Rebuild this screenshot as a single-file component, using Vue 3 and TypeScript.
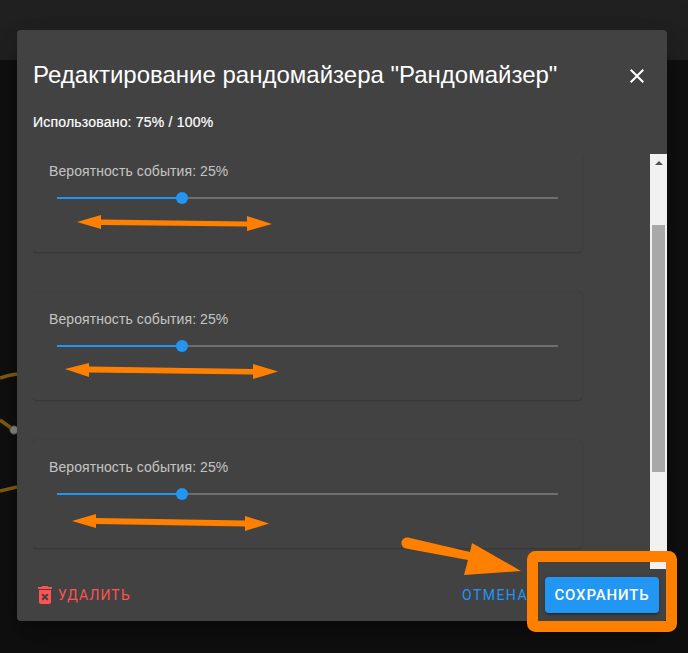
<script setup lang="ts">
const value = 25
const cards = [1, 2, 3]
</script>

<template>
  <div class="page">
    <div class="topbar"></div>
    <svg class="graph" width="17" height="653" viewBox="0 0 17 653">
      <path d="M0 378 Q8 375 17 374" class="edge" />
      <path d="M0 420 L14 430" class="edge" />
      <path d="M0 491 L17 487" class="edge" />
      <circle cx="14" cy="430" r="4.2" fill="#8f8f86" stroke="#3c4a58" stroke-width="1" />
    </svg>

    <div class="dialog">
      <header class="head">
        <h2 class="title">Редактирование рандомайзера "Рандомайзер"</h2>
        <button class="close" aria-label="Закрыть">
          <svg width="24" height="24" viewBox="0 0 24 24"><path fill="#fff" d="M19,6.41L17.59,5L12,10.59L6.41,5L5,6.41L10.59,12L5,17.59L6.41,19L12,13.41L17.59,19L19,17.59L13.41,12L19,6.41Z" /></svg>
        </button>
      </header>
      <div class="used">Использовано: 75% / 100%</div>

      <div class="scroll">
        <div class="list">
          <section v-for="c in cards" :key="c" class="card">
            <div class="label">Вероятность события: {{ value }}%</div>
            <div class="slider">
              <div class="fill" :style="{ width: value + '%' }">
                <span class="thumb"></span>
              </div>
            </div>
          </section>
        </div>
        <div class="scrollbar">
          <span class="sb-up"></span>
          <span class="sb-thumb"></span>
          <span class="sb-down"></span>
        </div>
      </div>

      <footer class="foot">
        <button class="btn danger">
          <svg class="trash" width="24" height="24" viewBox="0 0 24 24"><path fill="#ff5252" d="M6,19A2,2 0 0,0 8,21H16A2,2 0 0,0 18,19V7H6V19M8.46,11.88L9.87,10.47L12,12.59L14.12,10.47L15.53,11.88L13.41,14L15.53,16.12L14.12,17.53L12,15.41L9.87,17.53L8.46,16.12L10.59,14L8.46,11.88M15.5,4L14.5,3H9.5L8.5,4H5V6H19V4H15.5Z" /></svg>
          УДАЛИТЬ
        </button>
        <span class="spacer"></span>
        <button class="btn cancel">ОТМЕНА</button>
        <button class="btn save">СОХРАНИТЬ</button>
      </footer>
    </div>

    <svg class="marks" width="688" height="653" viewBox="0 0 688 653">
      <g fill="#ff8000">
        <path d="M77 222 L101 215 L101 219.5 L247 221.5 L247 216 L272 224 L247 231 L247 226.5 L101 225 L101 229 Z" />
        <path d="M65 369 L89 363 L89 366.5 L253 369 L253 364 L278 371.5 L253 379 L253 374.5 L89 372.5 L89 377 Z" />
        <path d="M72 521 L96 514 L96 518 L245 520.5 L245 516 L269 523.5 L245 531 L245 526.5 L96 524 L96 528 Z" />
        <path d="M472 543 L521 571 L464 575 L468 560 L406 548.5 A5.5 5.5 0 0 1 408 537.5 L470 552 Z" />
      </g>
      <rect x="532.5" y="556.5" width="139" height="70" rx="3" fill="none" stroke="#ff8000" stroke-width="11" />
    </svg>
  </div>
</template>

<style>
html, body { margin: 0; background: #101010; }
</style>

<style scoped>
.page {
  position: relative;
  width: 688px;
  height: 653px;
  overflow: hidden;
  background: #101010;
  font-family: "Liberation Sans", Arial, sans-serif;
}
.topbar {
  height: 60px;
  background: #212121;
}
.graph {
  position: absolute;
  left: 0;
  top: 0;
}
.edge {
  fill: none;
  stroke: #86600f;
  stroke-width: 3.5;
}
.dialog {
  position: absolute;
  left: 17px;
  top: 30px;
  width: 650px;
  height: 591px;
  display: flex;
  flex-direction: column;
  background: #424242;
  border-radius: 4px;
  color: #fff;
  box-shadow: 0 11px 15px -7px rgba(0,0,0,.2), 0 24px 38px 3px rgba(0,0,0,.14), 0 9px 46px 8px rgba(0,0,0,.12);
}
.head {
  display: flex;
  align-items: center;
  height: 32px;
  margin-top: 29px;
  padding: 0 18.5px 0 16px;
}
.title {
  flex: 1;
  margin: 0;
  font-size: 24px;
  font-weight: 400;
  line-height: 32px;
}
.close {
  width: 24px;
  height: 24px;
  padding: 0;
  border: 0;
  background: none;
  display: flex;
  transform: translateY(1px);
}
.used {
  margin: 21px 0 0 16px;
  height: 20px;
  font-size: 14px;
  font-weight: 400;
  line-height: 20px;
  letter-spacing: .2px;
  -webkit-text-stroke: .2px #fff;
}
.scroll {
  display: flex;
  justify-content: space-between;
  height: 415px;
  margin: 22px 0 0 16px;
  overflow: hidden;
}
.list {
  display: flex;
  flex-direction: column;
  gap: 40px;
  width: 549px;
  margin-top: -10px;
}
.card {
  box-sizing: border-box;
  height: 108px;
  padding: 17px 24px 0 16px;
  border-radius: 4px;
  background: #424242;
  box-shadow: 0 1px 2px 0 rgba(0,0,0,.18), 0 0 1px 0 rgba(0,0,0,.12);
}
.label {
  font-size: 14px;
  line-height: 20px;
  letter-spacing: .08px;
  color: rgba(255,255,255,.7);
}
.slider {
  height: 2px;
  margin: 16px 0 0 8px;
  background: #6e6e6e;
}
.fill {
  position: relative;
  height: 100%;
  background: #2196f3;
}
.thumb {
  position: absolute;
  right: -6px;
  top: -5px;
  width: 12px;
  height: 12px;
  border-radius: 50%;
  background: #2196f3;
}
.scrollbar {
  position: relative;
  flex: none;
  width: 17px;
  background: #f1f1f1;
}
.sb-up {
  position: absolute;
  left: 5px;
  top: 7px;
  border: 4px solid transparent;
  border-top: 0;
  border-bottom: 4px solid #505050;
}
.sb-down {
  position: absolute;
  left: 5px;
  bottom: 7px;
  border: 4px solid transparent;
  border-bottom: 0;
  border-top: 4px solid #505050;
}
.sb-thumb {
  position: absolute;
  left: 2px;
  top: 71px;
  width: 13px;
  height: 247px;
  background: #a8a8a8;
}
.foot {
  flex: 1;
  display: flex;
  align-items: center;
  padding: 0 8px 0 16px;
}
.spacer {
  flex: 1;
}
.btn {
  display: inline-flex;
  align-items: center;
  height: 36px;
  padding: 0;
  border: 0;
  background: none;
  font-family: Roboto, sans-serif;
  font-size: 14px;
  letter-spacing: 1.1px;
}
.danger {
  color: #ff5252;
}
.trash {
  margin-right: 1px;
}
.cancel {
  color: #2196f3;
  margin-right: 15px;
  letter-spacing: 1.45px;
}
.save {
  justify-content: center;
  width: 114px;
  margin-left: 2px;
  border-radius: 4px;
  background: #2196f3;
  color: #fff;
  font-size: 15px;
  font-weight: 500;
  letter-spacing: .85px;
  box-shadow: 0 3px 1px -2px rgba(0,0,0,.2), 0 2px 2px 0 rgba(0,0,0,.14), 0 1px 5px 0 rgba(0,0,0,.12);
}
.marks {
  position: absolute;
  left: 0;
  top: 0;
  pointer-events: none;
}
</style>
